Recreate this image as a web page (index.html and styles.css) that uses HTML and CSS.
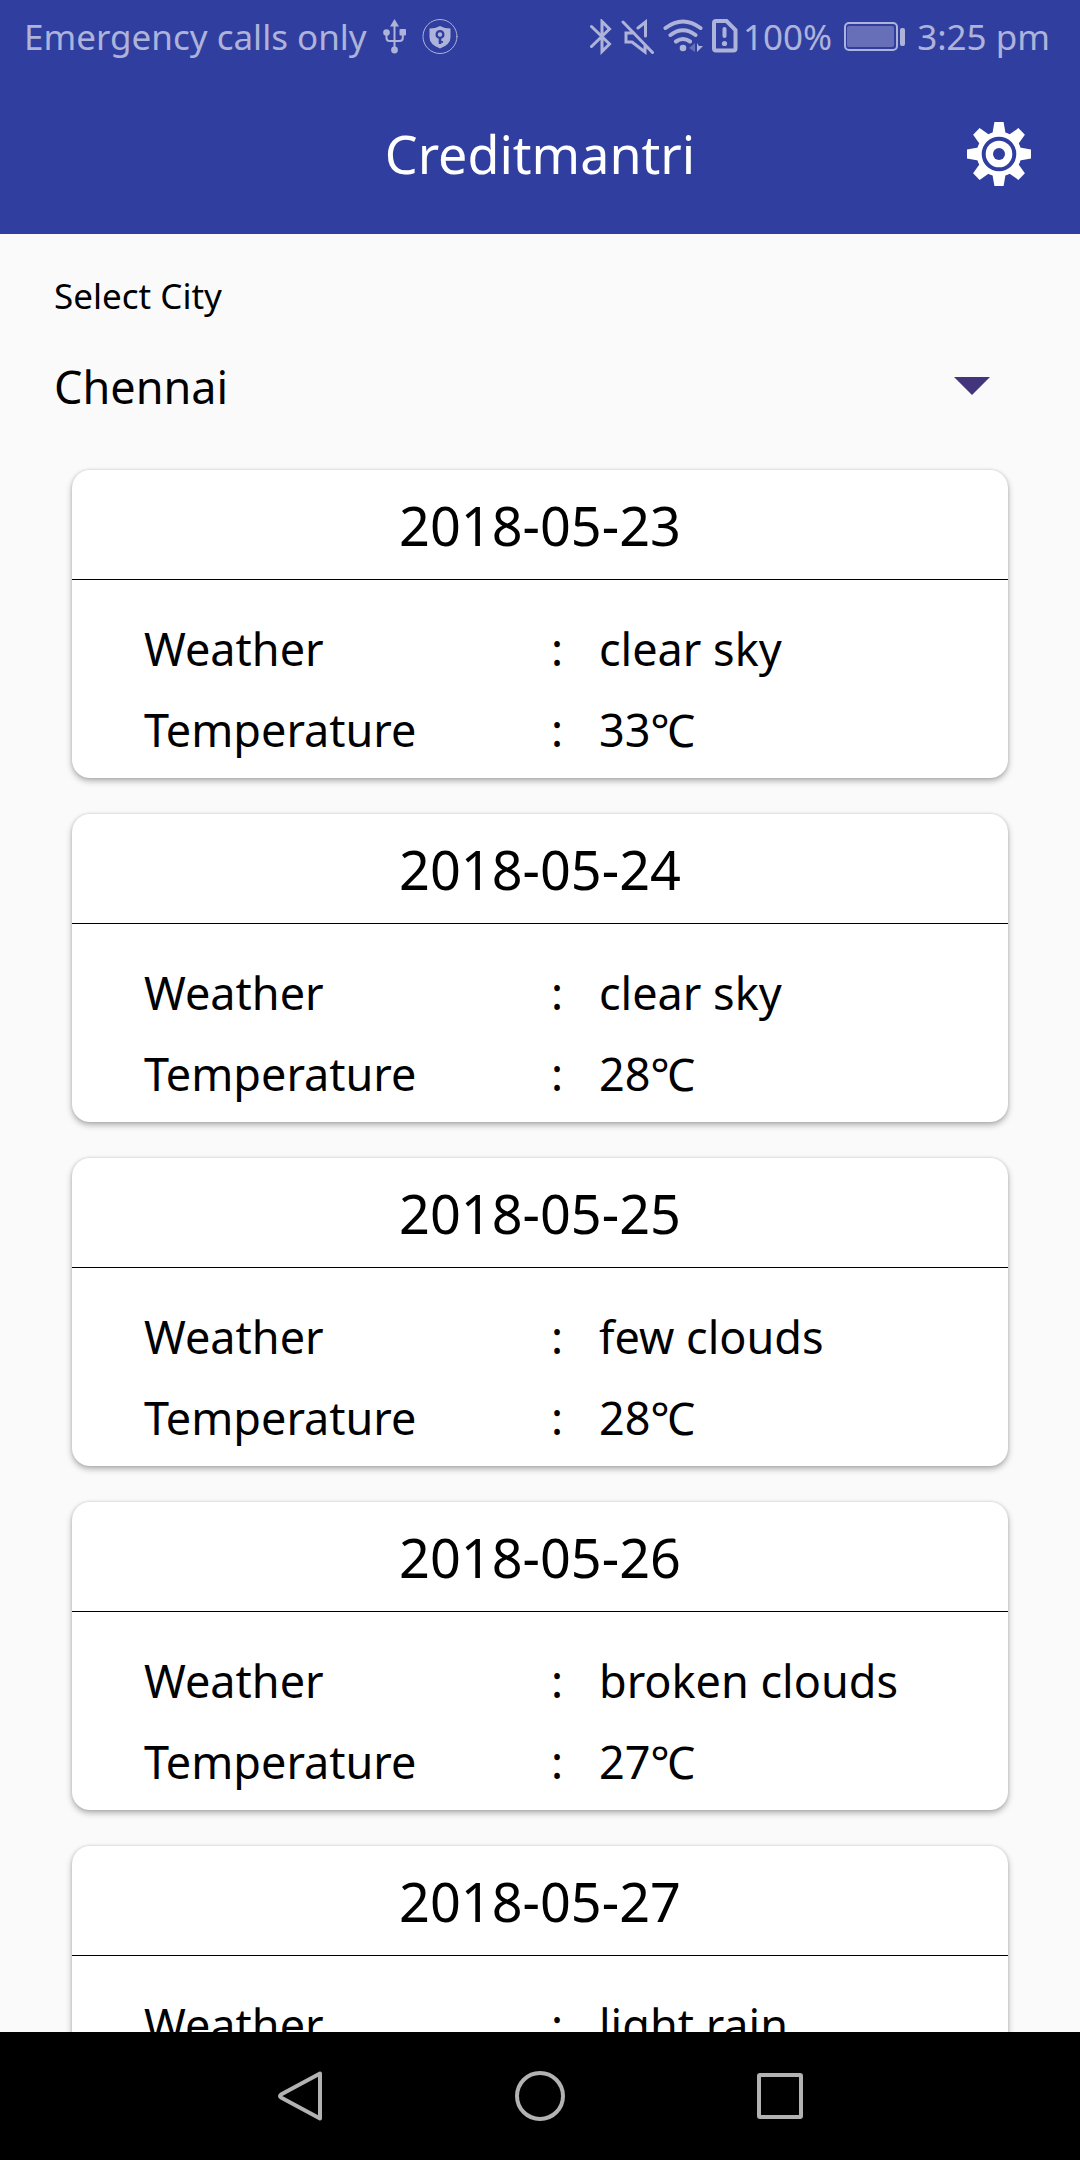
FILE: index.html
```html
<!DOCTYPE html>
<html lang="en">
<head>
<meta charset="utf-8">
<meta name="viewport" content="width=device-width, initial-scale=1">
<title>Creditmantri</title>
<link rel="stylesheet" href="styles.css">
</head>
<body>
<div class="status-bar">
  <div class="status-group status-left">
    <span>Emergency calls only</span>
    <svg width="23" height="36" viewBox="383 19 23 36" aria-hidden="true">
      <path d="M394.500 19l4.500 7.500h-9z"/>
      <circle cx="386.500" cy="32.500" r="3.300"/>
      <rect x="399.500" y="29" width="6.500" height="6.500" rx="1"/>
      <circle cx="394.500" cy="50" r="3.400"/>
      <path class="line thin" d="M394.500 24v25M386.500 33v5q0 3 3 3h10q3.300 0 3.300-3v-5"/>
    </svg>
    <svg width="36" height="36" viewBox="422 19 36 36" aria-hidden="true">
      <circle class="line hair" cx="440" cy="36.500" r="17"/>
      <path fill-rule="evenodd" d="M429.500 28.500q6 0 10.500-2.500q4.500 2.500 10.500 2.500v9q0 7-10.500 11q-10.500-4-10.500-11zM440 30a4.500 4.500 0 0 0-1.300 8.800v5.200h2.600v-1.300h1.700v-1.800h-1.700v-2.100a4.500 4.500 0 0 0-1.300-8.800zm0 2.300a2.200 2.200 0 1 1 0 4.400a2.200 2.200 0 1 1 0-4.400z"/>
    </svg>
  </div>
  <div class="status-group">
    <div class="status-icons">
      <svg width="22" height="36" viewBox="588 19 22 36" aria-hidden="true">
        <path class="line" d="M589.500 26.500l18 17.500l-7.500 7.500v-30l7.500 7.500l-18 17.500"/>
      </svg>
      <svg width="33" height="36" viewBox="620 19 33 36" aria-hidden="true">
        <path class="line" d="M622 22l29.500 30.500M633 33h-8v9h6l13 10v-6M637 28l7.500-6v14"/>
      </svg>
      <svg width="40" height="36" viewBox="661 19 40 36" aria-hidden="true">
        <path class="line heavy" d="M663.500 28q17.500-13 35 0M668.500 35q12.500-9.500 25 0M674 41.500q7-5 14 0"/>
        <circle cx="681" cy="48" r="3.300"/>
        <path class="dim" d="M687 48l6-5v9z"/>
        <path d="M695 43l2 3h4l-6 6z"/>
      </svg>
      <svg width="26" height="36" viewBox="711 19 26 36" aria-hidden="true">
        <path class="line heavy" d="M715 21h10.500l9 9v18.500q0 2-2 2h-17.500q-2 0-2-2v-25.500q0-2 2-2z"/>
        <path class="line heavy" d="M723.500 29v7"/>
        <circle cx="723.500" cy="43.500" r="2.600"/>
      </svg>
      <span>100%</span>
    </div>
    <svg width="61" height="36" viewBox="846 19 61 36" aria-hidden="true">
      <rect class="line thin" x="847" y="23" width="52" height="27" rx="4"/>
      <rect class="dim" x="849" y="26" width="47" height="21" rx="2"/>
      <rect x="902" y="28" width="5" height="18" rx="2"/>
    </svg>
    <span>3:25 pm</span>
  </div>
</div>

<header class="app-bar">
  <h1>Creditmantri</h1>
  <button class="settings" type="button" aria-label="Settings">
    <svg width="64" height="64" viewBox="-32 -32 64 64" aria-hidden="true">
      <defs><path id="tooth" d="M-4.600-32h9.200l2.400 14h-14z"/></defs>
      <g fill="#fff">
        <use href="#tooth"/>
        <use href="#tooth" transform="rotate(45)"/>
        <use href="#tooth" transform="rotate(90)"/>
        <use href="#tooth" transform="rotate(135)"/>
        <use href="#tooth" transform="rotate(180)"/>
        <use href="#tooth" transform="rotate(225)"/>
        <use href="#tooth" transform="rotate(270)"/>
        <use href="#tooth" transform="rotate(315)"/>
        <circle r="22.500"/>
      </g>
      <circle r="15.300" fill="none" stroke="#303f9f" stroke-width="4"/>
      <circle r="6" fill="#303f9f"/>
    </svg>
  </button>
</header>

<main class="content">
  <div class="city">
    <label for="city">Select City</label>
    <div class="picker">
      <select id="city"><option>Chennai</option></select>
      <svg width="36" height="18" viewBox="0 0 36 18" aria-hidden="true"><path d="M0 0h36l-18 18z"/></svg>
    </div>
  </div>
  <div class="forecast">
    <article class="card">
      <h2>2018-05-23</h2>
      <dl>
        <dt>Weather</dt><dd>:</dd><dd>clear sky</dd>
        <dt>Temperature</dt><dd>:</dd><dd>33℃</dd>
      </dl>
    </article>
    <article class="card">
      <h2>2018-05-24</h2>
      <dl>
        <dt>Weather</dt><dd>:</dd><dd>clear sky</dd>
        <dt>Temperature</dt><dd>:</dd><dd>28℃</dd>
      </dl>
    </article>
    <article class="card">
      <h2>2018-05-25</h2>
      <dl>
        <dt>Weather</dt><dd>:</dd><dd>few clouds</dd>
        <dt>Temperature</dt><dd>:</dd><dd>28℃</dd>
      </dl>
    </article>
    <article class="card">
      <h2>2018-05-26</h2>
      <dl>
        <dt>Weather</dt><dd>:</dd><dd>broken clouds</dd>
        <dt>Temperature</dt><dd>:</dd><dd>27℃</dd>
      </dl>
    </article>
    <article class="card">
      <h2>2018-05-27</h2>
      <dl>
        <dt>Weather</dt><dd>:</dd><dd>light rain</dd>
      </dl>
    </article>
  </div>
</main>

<nav class="nav-bar" aria-label="System">
  <button type="button" aria-label="Back">
    <svg width="50" height="50" viewBox="0 0 50 50"><path d="M45 2.500v45L6 26.500q-2-1.500 0-3z"/></svg>
  </button>
  <button type="button" aria-label="Home">
    <svg width="50" height="50" viewBox="0 0 50 50"><circle cx="25" cy="25" r="23"/></svg>
  </button>
  <button type="button" aria-label="Recent apps">
    <svg width="50" height="50" viewBox="0 0 50 50"><rect x="4" y="4" width="42" height="42" rx="1"/></svg>
  </button>
</nav>
</body>
</html>
```
FILE: styles.css
```css
* {
  box-sizing: border-box;
}

body {
  margin: 0;
  height: 100vh;
  display: flex;
  flex-direction: column;
  background: #fafafa;
  color: #000;
  font-family: "Noto Sans", "Noto Sans CJK SC", sans-serif;
}

button {
  margin: 0;
  padding: 0;
  border: 0;
  background: none;
}

svg {
  display: block;
  flex: none;
}

/* Status bar */
.status-bar {
  flex: none;
  display: flex;
  justify-content: space-between;
  padding: 0 30px 0 24px;
  background: #303f9f;
  color: #aeb3da;
  font-size: 35px;
  line-height: 74px;
  white-space: nowrap;
}

.status-group {
  display: flex;
  align-items: center;
  gap: 12px;
}

.status-icons {
  display: flex;
  align-items: center;
  gap: 9px;
}

.status-left {
  gap: 16px;
}

.status-icons span {
  margin-left: -4px;
}

.status-bar svg {
  fill: #aeb3da;
}

.status-bar .line {
  fill: none;
  stroke: #aeb3da;
  stroke-width: 3;
  stroke-linecap: round;
  stroke-linejoin: miter;
}

.status-bar .thin {
  stroke-width: 2;
}

.status-bar .hair {
  stroke-width: 1;
}

.status-bar .heavy {
  stroke-width: 4;
}

.status-bar .dim {
  fill: #666fb8;
}

/* App bar */
.app-bar {
  flex: none;
  display: grid;
  grid-template-columns: 1fr auto 1fr;
  align-items: center;
  padding: 0 49px;
  background: #303f9f;
  color: #fff;
}

.app-bar h1 {
  grid-column: 2;
  margin: 0;
  font-size: 52px;
  font-weight: 400;
  line-height: 160px;
}

.settings {
  justify-self: end;
}

/* Content */
.content {
  flex: 1;
  min-height: 0;
  overflow-y: auto;
  scrollbar-width: none;
}

.city {
  padding: 37px 54px 0;
}

.city label {
  display: block;
  font-size: 35px;
  line-height: 50px;
}

.picker {
  display: grid;
  align-items: center;
  margin-top: 23px;
}

.picker select,
.picker svg {
  grid-area: 1 / 1;
}

.picker select {
  width: 100%;
  height: 84px;
  padding: 0;
  border: 0;
  appearance: none;
  background: none;
  color: inherit;
  font-family: inherit;
  font-size: 45px;
}

.picker svg {
  justify-self: end;
  margin-right: 36px;
  fill: #43357b;
  pointer-events: none;
}

.forecast {
  display: flex;
  flex-direction: column;
  gap: 36px;
  padding: 42px 72px 36px;
}

.card {
  border-radius: 18px;
  background: #fff;
  box-shadow: 0 3px 6px rgba(0, 0, 0, 0.3), 0 0 3px rgba(0, 0, 0, 0.14);
}

.card h2 {
  margin: 0;
  padding-top: 2px;
  border-bottom: 1px solid #000;
  font-size: 54px;
  font-weight: 400;
  line-height: 107px;
  text-align: center;
}

.card dl {
  display: grid;
  grid-template-columns: 407fr 48fr 337fr;
  margin: 0;
  padding: 28px 72px 8px;
  font-size: 45px;
  line-height: 81px;
}

.card dd {
  margin: 0;
  white-space: nowrap;
}

/* Navigation bar */
.nav-bar {
  flex: none;
  display: flex;
  justify-content: center;
  gap: 190px;
  padding: 39px 0;
  background: #000;
}

.nav-bar svg {
  fill: none;
  stroke: #b2b2b2;
  stroke-width: 4;
  stroke-linejoin: round;
}
```
